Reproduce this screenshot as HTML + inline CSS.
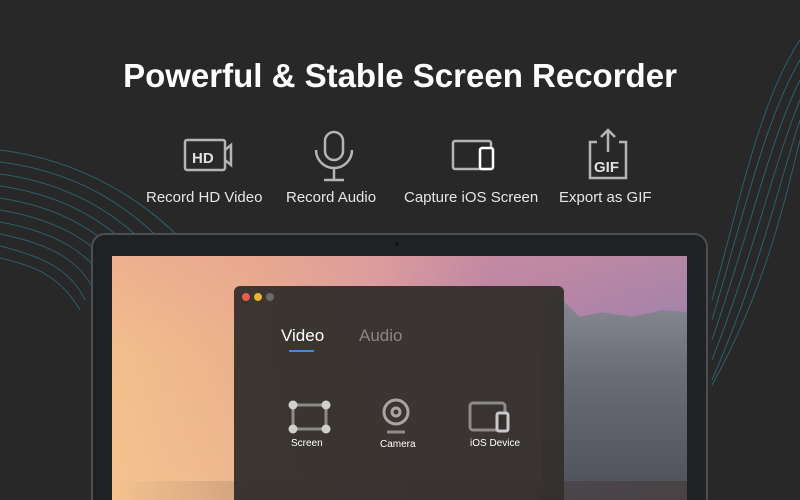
<!DOCTYPE html>
<html><head><meta charset="utf-8"><style>
*{margin:0;padding:0;box-sizing:border-box}
html,body{width:800px;height:500px;overflow:hidden}
body{background:#282828;font-family:"Liberation Sans",sans-serif;position:relative}
.t{position:absolute;left:0;width:800px;top:57px;text-align:center;color:#fff;font-size:33px;font-weight:bold}
.f{position:absolute;top:189px;color:#e6e6e6;font-size:15px}
.lap{position:absolute;left:91px;top:233px;width:617px;height:290px;background:#1f2123;border:2px solid #4a4f55;border-radius:14px}
.scr{position:absolute;left:112px;top:256px;width:575px;height:244px;overflow:hidden;
background:linear-gradient(90deg,#f2bf8c 0%,#eab08c 25%,#d9a0a0 45%,#b483a8 65%,#9a7fae 100%)}
.glow{position:absolute;left:0;top:0;width:100%;height:100%;background:linear-gradient(180deg,rgba(230,150,150,.35),rgba(255,220,160,0) 40%,rgba(255,210,150,.2) 100%)}
.rock{position:absolute;left:430px;top:30px;width:150px;height:220px;background:linear-gradient(180deg,#8b8d96,#6a6d78 40%,#4c4e58);clip-path:polygon(0 8%,10% 4%,25% 14%,40% 12%,60% 14%,80% 11%,100% 12%,100% 100%,0 100%)}
.pan{position:absolute;left:234px;top:286px;width:330px;height:220px;background:rgba(52,48,46,.96);border-radius:6px}
.d{position:absolute;top:7px;width:8px;height:8px;border-radius:50%}
.pl{position:absolute;color:#fff;font-size:10px}
</style></head><body>
<svg width="800" height="500" style="position:absolute;left:0;top:0" fill="none" stroke="#2f8ea6" stroke-opacity=".55" stroke-width="1">
<path d="M0 150 C80 160 150 200 200 260"/><path d="M0 162 C80 172 140 210 185 268"/><path d="M0 174 C75 184 130 220 170 272"/><path d="M0 186 C70 196 120 228 155 276"/><path d="M0 198 C65 208 110 236 140 280"/><path d="M0 210 C60 220 100 244 125 284"/><path d="M0 222 C55 232 90 252 110 288"/><path d="M0 234 C50 244 80 260 95 292"/><path d="M0 246 C40 256 70 268 85 300"/><path d="M0 258 C35 266 60 276 80 310"/>
<path d="M800 40 C760 100 740 200 712 300"/><path d="M800 60 C765 120 745 210 712 320"/><path d="M800 80 C770 140 750 230 712 340"/><path d="M800 100 C775 160 755 250 712 360"/><path d="M800 120 C780 180 760 270 712 380"/><path d="M800 140 C785 200 765 290 712 385"/>
</svg>
<div class="t">Powerful &amp; Stable Screen Recorder</div>
<svg width="800" height="60" style="position:absolute;left:0;top:128px" fill="none" stroke="#b4b4b4" stroke-width="2.5">
<rect x="185" y="12" width="40" height="30" rx="2"/><path d="M225 22 l6-5 v20 l-6-5"/>
<text x="192" y="35" fill="#e0e0e0" stroke="none" font-family="Liberation Sans" font-weight="bold" font-size="15">HD</text>
<rect x="325" y="4" width="18" height="28" rx="9"/><path d="M316 22 a18 18 0 0 0 36 0 M334 40 v12 M324 52 h20"/>
<rect x="453" y="13" width="38" height="28" rx="2"/><rect x="480" y="20" width="13" height="21" rx="2" stroke="#fff" fill="#282828"/>
<path d="M597 14 h-7 v36 h36 v-36 h-7 M608 2 v22 M601 9 l7-7 7 7"/>
<text x="594" y="44" fill="#e0e0e0" stroke="none" font-family="Liberation Sans" font-weight="bold" font-size="15">GIF</text>
</svg>
<div class="f" style="left:146px">Record HD Video</div>
<div class="f" style="left:286px">Record Audio</div>
<div class="f" style="left:404px">Capture iOS Screen</div>
<div class="f" style="left:559px">Export as GIF</div>
<div class="lap"></div>
<div style="position:absolute;left:395px;top:242px;width:4px;height:4px;border-radius:50%;background:#111"></div>
<div class="scr"><div class="glow"></div><div class="rock"></div>
<div style="position:absolute;left:0;top:225px;width:575px;height:20px;background:linear-gradient(90deg,rgba(80,60,50,0),rgba(70,60,60,.7))"></div></div>
<div class="pan">
<div class="d" style="left:8px;background:#ec5a52"></div><div class="d" style="left:20px;background:#e8b52c"></div><div class="d" style="left:32px;background:#6a6a6a"></div>
<div style="position:absolute;left:47px;top:40px;color:#fff;font-size:17px">Video</div>
<div style="position:absolute;left:125px;top:40px;color:#8a8684;font-size:17px">Audio</div>
<div style="position:absolute;left:55px;top:64px;width:25px;height:2px;background:#3a8ee0"></div>
<svg width="330" height="60" style="position:absolute;left:0;top:105px" fill="none" stroke="#8d8a88" stroke-width="3">
<rect x="59" y="14" width="33" height="24"/>
<g fill="#d0d0d0" stroke="none"><circle cx="59" cy="14" r="4.5"/><circle cx="92" cy="14" r="4.5"/><circle cx="59" cy="38" r="4.5"/><circle cx="92" cy="38" r="4.5"/></g>
<circle cx="162" cy="21" r="12" stroke="#a8a5a3"/><circle cx="162" cy="21" r="4" stroke="#a8a5a3"/><path d="M153 41 h18" stroke="#8d8a88"/>
<rect x="236" y="12" width="35" height="27" rx="3"/><rect x="263" y="22" width="11" height="18" rx="2" stroke="#c8c8c8" fill="#34302e"/>
</svg>
<div class="pl" style="left:57px;top:152px">Screen</div>
<div class="pl" style="left:146px;top:153px">Camera</div>
<div class="pl" style="left:236px;top:152px">iOS Device</div>
</div>
</body></html>
